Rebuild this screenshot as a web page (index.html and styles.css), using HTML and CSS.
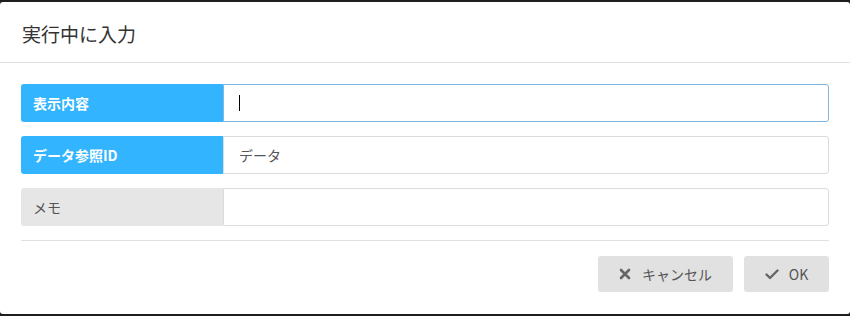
FILE: index.html
```html
<!DOCTYPE html>
<html lang="ja">
<head>
    <meta charset="UTF-8">
    <title>実行中に入力</title>
    <link rel="stylesheet" href="styles.css">
</head>
<body>
    <div class="dialog">
        <div class="dialog-header">
            <h1>実行中に入力</h1>
        </div>
        <div class="dialog-body">
            <div class="field">
                <label class="field-label active">表示内容</label>
                <div class="field-input focused"><span class="caret"></span></div>
            </div>
            <div class="field">
                <label class="field-label active">データ参照ID</label>
                <div class="field-input">データ</div>
            </div>
            <div class="field">
                <label class="field-label">メモ</label>
                <div class="field-input"></div>
            </div>
        </div>
        <div class="dialog-footer">
            <button class="btn">
                <svg width="12" height="12" viewBox="0 0 12 12"><path d="M2 2 L10 10 M10 2 L2 10" stroke="#666" stroke-width="2.6" stroke-linecap="round"/></svg>
                キャンセル
            </button>
            <button class="btn btn-ok">
                <svg width="14" height="12" viewBox="0 0 14 12"><path d="M1.5 6.5 L5 10 L12.5 2.5" fill="none" stroke="#666" stroke-width="2.4" stroke-linecap="round" stroke-linejoin="round"/></svg>
                OK
            </button>
        </div>
    </div>
</body>
</html>
```

FILE: styles.css
```css
body {
    margin: 0;
    background-color: #1e1e1e;
    font-family: "Noto Sans CJK JP", "Noto Sans", sans-serif;
    height: 316px;
    overflow: hidden;
}

.dialog {
    margin-top: 2px;
    height: 312px;
    background-color: #fff;
    border-radius: 3px;
}

.dialog-header {
    height: 61px;
    border-bottom: 1px solid #e1e1e1;
    display: flex;
    align-items: center;
    padding: 0 22px;
    box-sizing: border-box;
}

h1 {
    margin: 0;
    font-size: 19px;
    font-weight: 400;
    color: #333;
    position: relative;
    top: 1px;
}

.dialog-body {
    margin: 0 21px;
    padding: 21px 0 14px;
    border-bottom: 1px solid #e1e1e1;
    display: flex;
    flex-direction: column;
    gap: 14px;
}

.field {
    display: flex;
    height: 38px;
}

.field-label {
    width: 202px;
    flex-shrink: 0;
    box-sizing: border-box;
    padding-left: 12px;
    display: flex;
    align-items: center;
    background-color: #e6e6e6;
    color: #555;
    font-size: 14px;
    font-weight: 400;
    border-radius: 3px 0 0 3px;
}

.field-label.active {
    background-color: #33b4ff;
    color: #fff;
    font-weight: 700;
}

.field-input {
    flex: 1;
    border: 1px solid #dcdcdc;
    border-radius: 0 3px 3px 0;
    display: flex;
    align-items: center;
    padding-left: 15px;
    font-size: 14px;
    color: #555;
}

.field-input.focused {
    border-color: #80b6df;
}

.caret {
    width: 1px;
    height: 16px;
    background-color: #000;
}

.dialog-footer {
    display: flex;
    justify-content: flex-end;
    gap: 11px;
    padding: 15px 21px 0;
}

.btn {
    height: 36px;
    width: 135px;
    border: none;
    border-radius: 3px;
    background-color: #e1e1e1;
    color: #555;
    font-family: inherit;
    font-size: 14px;
    display: flex;
    align-items: center;
    justify-content: center;
    gap: 11px;
    padding: 0;
}

.btn-ok {
    width: 85px;
    gap: 10px;
}
```
